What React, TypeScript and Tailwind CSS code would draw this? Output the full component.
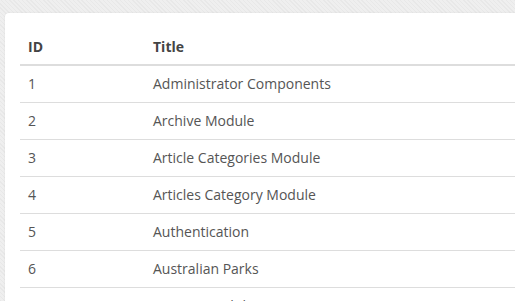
import React from "react";

const rows = [
  [1, "Administrator Components"],
  [2, "Archive Module"],
  [3, "Article Categories Module"],
  [4, "Articles Category Module"],
  [5, "Authentication"],
  [6, "Australian Parks"],
  [7, "Banner Module"],
];

export default function App() {
  return (
    <div
      className="h-[301px] w-[515px] overflow-hidden bg-[#ebebeb] bg-[repeating-linear-gradient(45deg,#e8e8e8_0px,#e8e8e8_1px,#efefef_1px,#efefef_3px)] pl-[5px] pt-[13px]"
      style={{ fontFamily: '"Open Sans", sans-serif' }}
    >
      <div className="h-[320px] rounded-tl-[4px] bg-white pl-[15px] pt-[15px] shadow-[0_0_2px_rgba(0,0,0,0.08)]">
        <table className="w-full border-collapse text-[14px]">
          <thead>
            <tr className="h-[37px] border-b-2 border-[#dddddd] text-left">
              <th className="w-[125px] pl-[8px] font-bold text-[#444]">ID</th>
              <th className="pl-[8px] font-bold text-[#444]">Title</th>
            </tr>
          </thead>
          <tbody>
            {rows.map(([id, title]) => (
              <tr key={id} className="h-[37px] border-b border-[#dddddd] text-[#555]">
                <td className="pl-[8px] pb-[1px]">{id}</td>
                <td className="pl-[8px] pb-[1px]">{title}</td>
              </tr>
            ))}
          </tbody>
        </table>
      </div>
    </div>
  );
}
